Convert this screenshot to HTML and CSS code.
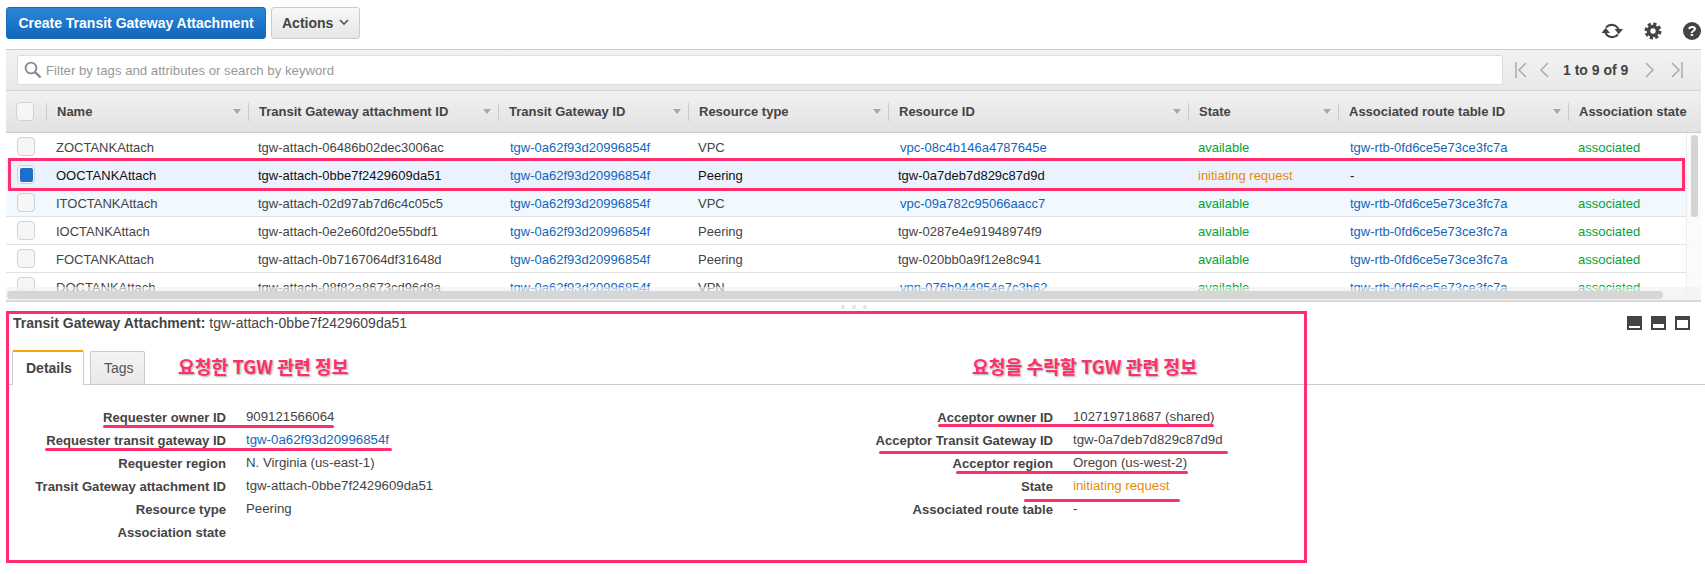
FILE: index.html
```html
<!DOCTYPE html>
<html lang="en">
<head>
<meta charset="UTF-8">
<meta name="viewport" content="width=device-width, initial-scale=1.0">
<title>Transit Gateway Attachments</title>
<link rel="stylesheet" href="styles.css">
</head>
<body>
<div class="page">
    <div class="toolbar">
        <button class="btn btn-primary">Create Transit Gateway Attachment</button>
        <button class="btn btn-actions">Actions
            <svg class="caret" width="10" height="7" viewBox="0 0 10 7"><path d="M1 1l4 4 4-4" fill="none" stroke="#555" stroke-width="1.6"/></svg>
        </button>
        <div class="tool-icons">
            <svg width="22" height="20" viewBox="0 0 22 20"><g fill="none" stroke="#444" stroke-width="2"><path d="M5 6.5a7.5 7.5 0 0 1 12.6 2"/><path d="M17 13.5a7.5 7.5 0 0 1-12.6-2"/></g><path d="M13.5 8h8.5l-4.2 5.2zM0.5 12h8.5l-4.3-5.2z" fill="#444"/></svg>
            <svg width="18" height="18" viewBox="0 0 18 18"><circle cx="9" cy="9" r="7" fill="none" stroke="#444" stroke-width="3" stroke-dasharray="3.2 2.3"/><circle cx="9" cy="9" r="4.5" fill="none" stroke="#444" stroke-width="3.6"/></svg>
            <span class="help">?</span>
        </div>
    </div>

    <div class="filter-bar">
        <div class="search">
            <svg width="18" height="18" viewBox="0 0 18 18"><circle cx="7" cy="7" r="5.4" fill="none" stroke="#888" stroke-width="1.8"/><path d="M11 11l5.5 5.5" stroke="#888" stroke-width="2.4"/></svg>
            <span>Filter by tags and attributes or search by keyword</span>
        </div>
        <div class="pager">
            <svg width="12" height="16" viewBox="0 0 12 16"><path d="M1 0v16M11 1L4 8l7 7" fill="none" stroke="#aaa" stroke-width="1.5"/></svg>
            <svg class="prev" width="9" height="16" viewBox="0 0 9 16"><path d="M8 1L1 8l7 7" fill="none" stroke="#aaa" stroke-width="1.5"/></svg>
            <span class="pager-text">1 to 9 of 9</span>
            <svg class="next" width="9" height="16" viewBox="0 0 9 16"><path d="M1 1l7 7-7 7" fill="none" stroke="#aaa" stroke-width="1.5"/></svg>
            <svg width="12" height="16" viewBox="0 0 12 16"><path d="M11 0v16M1 1l7 7-7 7" fill="none" stroke="#aaa" stroke-width="1.5"/></svg>
        </div>
    </div>

    <div class="grid-wrap">
        <div class="row head">
            <div class="check-cell"><span class="check"></span></div>
            <div class="th"><b>Name</b><i></i></div>
            <div class="th"><b>Transit Gateway attachment ID</b><i></i></div>
            <div class="th"><b>Transit Gateway ID</b><i></i></div>
            <div class="th"><b>Resource type</b><i></i></div>
            <div class="th"><b>Resource ID</b><i></i></div>
            <div class="th"><b>State</b><i></i></div>
            <div class="th"><b>Associated route table ID</b><i></i></div>
            <div class="th"><b>Association state</b></div>
        </div>
        <div class="row">
            <div class="check-cell"><span class="check"></span></div>
            <div class="td">ZOCTANKAttach</div>
            <div class="td">tgw-attach-06486b02dec3006ac</div>
            <div class="td"><a>tgw-0a62f93d20996854f</a></div>
            <div class="td">VPC</div>
            <div class="td"><a>vpc-08c4b146a4787645e</a></div>
            <div class="td ok">available</div>
            <div class="td"><a>tgw-rtb-0fd6ce5e73ce3fc7a</a></div>
            <div class="td ok">associated</div>
        </div>
        <div class="row selected">
            <div class="check-cell"><span class="check on"></span></div>
            <div class="td">OOCTANKAttach</div>
            <div class="td">tgw-attach-0bbe7f2429609da51</div>
            <div class="td"><a>tgw-0a62f93d20996854f</a></div>
            <div class="td">Peering</div>
            <div class="td">tgw-0a7deb7d829c87d9d</div>
            <div class="td warn">initiating request</div>
            <div class="td"><a class="plain">-</a></div>
            <div class="td"></div>
        </div>
        <div class="row hover">
            <div class="check-cell"><span class="check"></span></div>
            <div class="td">ITOCTANKAttach</div>
            <div class="td">tgw-attach-02d97ab7d6c4c05c5</div>
            <div class="td"><a>tgw-0a62f93d20996854f</a></div>
            <div class="td">VPC</div>
            <div class="td"><a>vpc-09a782c95066aacc7</a></div>
            <div class="td ok">available</div>
            <div class="td"><a>tgw-rtb-0fd6ce5e73ce3fc7a</a></div>
            <div class="td ok">associated</div>
        </div>
        <div class="row">
            <div class="check-cell"><span class="check"></span></div>
            <div class="td">IOCTANKAttach</div>
            <div class="td">tgw-attach-0e2e60fd20e55bdf1</div>
            <div class="td"><a>tgw-0a62f93d20996854f</a></div>
            <div class="td">Peering</div>
            <div class="td">tgw-0287e4e91948974f9</div>
            <div class="td ok">available</div>
            <div class="td"><a>tgw-rtb-0fd6ce5e73ce3fc7a</a></div>
            <div class="td ok">associated</div>
        </div>
        <div class="row">
            <div class="check-cell"><span class="check"></span></div>
            <div class="td">FOCTANKAttach</div>
            <div class="td">tgw-attach-0b7167064df31648d</div>
            <div class="td"><a>tgw-0a62f93d20996854f</a></div>
            <div class="td">Peering</div>
            <div class="td">tgw-020bb0a9f12e8c941</div>
            <div class="td ok">available</div>
            <div class="td"><a>tgw-rtb-0fd6ce5e73ce3fc7a</a></div>
            <div class="td ok">associated</div>
        </div>
        <div class="row">
            <div class="check-cell"><span class="check"></span></div>
            <div class="td">DOCTANKAttach</div>
            <div class="td">tgw-attach-08f82a8673cd96d8a</div>
            <div class="td"><a>tgw-0a62f93d20996854f</a></div>
            <div class="td">VPN</div>
            <div class="td"><a>vpn-076b944954e7c3b62</a></div>
            <div class="td ok">available</div>
            <div class="td"><a>tgw-rtb-0fd6ce5e73ce3fc7a</a></div>
            <div class="td ok">associated</div>
        </div>
        <!-- scrollbars sit on top of the rows -->
        <div class="track-v"><span></span></div>
        <div class="track-h"><span></span></div>
    </div>

    <div class="resizer"><i></i><i></i><i></i></div>

    <div class="detail-head">
        <div class="detail-title"><b>Transit Gateway Attachment:</b> tgw-attach-0bbe7f2429609da51</div>
        <div class="pane-icons">
            <span class="pane-icon small"></span>
            <span class="pane-icon mid"></span>
            <span class="pane-icon big"></span>
        </div>
    </div>

    <div class="tabs">
        <div class="tab active">Details</div>
        <div class="tab">Tags</div>
    </div>

    <div class="details">
        <dl class="col-left">
            <dt>Requester owner ID</dt><dd>909121566064</dd>
            <dt>Requester transit gateway ID</dt><dd><a>tgw-0a62f93d20996854f</a></dd>
            <dt>Requester region</dt><dd>N. Virginia (us-east-1)</dd>
            <dt>Transit Gateway attachment ID</dt><dd>tgw-attach-0bbe7f2429609da51</dd>
            <dt>Resource type</dt><dd>Peering</dd>
            <dt>Association state</dt><dd></dd>
        </dl>
        <dl class="col-right">
            <dt>Acceptor owner ID</dt><dd>102719718687 (shared)</dd>
            <dt>Acceptor Transit Gateway ID</dt><dd>tgw-0a7deb7d829c87d9d</dd>
            <dt>Acceptor region</dt><dd>Oregon (us-west-2)</dd>
            <dt>State</dt><dd class="warn">initiating request</dd>
            <dt>Associated route table</dt><dd>-</dd>
        </dl>
    </div>
</div>

<!-- pink annotations drawn over the console -->
<div class="box box-row"></div>
<div class="box box-detail"></div>
<div class="note note-left">요청한 TGW 관련 정보</div>
<div class="note note-right">요청을 수락할 TGW 관련 정보</div>
<div class="uline u1"></div>
<div class="uline u2"></div>
<div class="uline u3"></div>
<div class="uline u4"></div>
<div class="uline u5"></div>
<div class="uline u6"></div>
</body>
</html>
```

FILE: styles.css
```css
* {
    box-sizing: border-box;
}
html, body {
    height: 574px;
    overflow: hidden;
}
body {
    margin: 0;
    background-color: #fff;
    font-family: "Liberation Sans", Arial, sans-serif;
    font-size: 13px;
    color: #444;
    position: relative;
}
.page {
    padding: 7px 4px 0 6px;
}
a {
    color: #1166bb;
}

/* top buttons */
.toolbar {
    display: flex;
    height: 42px;
    align-items: flex-start;
}
.btn {
    height: 32px;
    border-radius: 3px;
    font-family: inherit;
    font-weight: bold;
    font-size: 14px;
    padding: 0;
}
.btn-primary {
    width: 260px;
    color: #fff;
    background: linear-gradient(#2b87d9, #1266bc);
    border: 1px solid #1a6ab8;
}
.btn-actions {
    width: 89px;
    margin-left: 5px;
    color: #444;
    background: linear-gradient(#f8f8f8, #e6e6e6);
    border: 1px solid #ccc;
    text-align: left;
    padding-left: 10px;
}
.caret {
    margin-left: 2px;
    vertical-align: 2px;
}
.tool-icons {
    margin-left: auto;
    margin-top: 14px;
    margin-right: 3px;
    display: flex;
    align-items: center;
    gap: 21px;
}
.help {
    width: 18px;
    height: 18px;
    margin-right: -3px;
    border-radius: 50%;
    background-color: #444;
    color: #fff;
    font-weight: bold;
    font-size: 15px;
    line-height: 18px;
    text-align: center;
}

/* filter row */
.filter-bar {
    height: 42px;
    display: flex;
    align-items: center;
    padding: 0 0 0 11px;
    border-top: 1px solid #ccc;
    border-bottom: 1px solid #d5d5d5;
    background: linear-gradient(#f2f2f2, #e9e9e9);
}
.search {
    width: 1486px;
    height: 30px;
    display: flex;
    align-items: center;
    gap: 4px;
    padding-left: 6px;
    background-color: #fff;
    border: 1px solid #ddd;
    border-radius: 3px;
    color: #999;
    font-size: 13.2px;
}
.pager {
    display: flex;
    align-items: center;
    margin-left: 12px;
}
.prev {
    margin-left: 13px;
}
.pager-text {
    width: 67px;
    margin-left: 14px;
    font-weight: bold;
    font-size: 14px;
    white-space: nowrap;
}
.next {
    margin-left: 15px;
}
.next + svg {
    margin-left: 17px;
}

/* the table */
.grid-wrap {
    position: relative;
    height: 211px;
    overflow: hidden;
    border-bottom: 2px solid #d8d8d8;
}
.row {
    display: grid;
    grid-template-columns: 40px 202px 250px 190px 200px 300px 150px 230px 133px;
    height: 28px;
    align-items: center;
    border-bottom: 1px solid #e1e1e1;
    white-space: nowrap;
}
.row.head {
    height: 42px;
    background: linear-gradient(#f1f1f1, #e2e2e2);
    border-bottom: 1px solid #ccc;
}
.row.selected {
    background-color: #ebf2fd;
    color: #111;
}
.row.hover {
    background-color: #f1f8fe;
}
.check-cell {
    padding-left: 11px;
}
.check {
    display: block;
    width: 18px;
    height: 19px;
    border: 1px solid #d2d2d2;
    border-radius: 4px;
    background-color: #f6f6f6;
    position: relative;
}
.check.on::after {
    content: "";
    position: absolute;
    left: 2px;
    top: 2px;
    width: 13px;
    height: 14px;
    border-radius: 2px;
    background-color: #1b70cc;
}
.head .check-cell {
    padding-left: 10px;
}
.th {
    display: flex;
    align-items: center;
    justify-content: space-between;
    height: 18px;
    padding: 0 7px 0 10px;
    border-left: 1px solid #ccc;
    font-size: 13px;
}
.th i {
    width: 0;
    height: 0;
    border-left: 4px solid transparent;
    border-right: 4px solid transparent;
    border-top: 5px solid #a8a8a8;
}
.td {
    padding: 1px 0 0 10px;
}
.td a {
    margin-left: 2px;
}
.td a.plain {
    color: #111;
}
.ok {
    color: #00a33c;
}
.warn {
    color: #e88a00;
}
.track-v {
    position: absolute;
    top: 42px;
    right: 0;
    bottom: 0;
    width: 15px;
    padding: 2px 3px 0 4px;
    background-color: rgba(250, 250, 250, 0.85);
    border-left: 1px solid #eee;
}
.track-v span {
    display: block;
    height: 82px;
    border-radius: 4px;
    background-color: #d4d4d4;
}
.track-h {
    position: absolute;
    left: 0;
    right: 0;
    bottom: 0;
    height: 13px;
    padding: 4px 38px 0 1px;
    background-color: rgba(240, 240, 240, 0.65);
}
.track-h span {
    display: block;
    height: 8px;
    border-radius: 4px;
    background-color: #d6d6d6;
}

/* drag handle between panes */
.resizer {
    height: 9px;
    display: flex;
    justify-content: center;
    align-items: center;
    gap: 7px;
}
.resizer i {
    width: 4px;
    height: 4px;
    border-radius: 50%;
    background-color: #e2e2e2;
}

/* lower pane */
.detail-head {
    height: 22px;
    display: flex;
    justify-content: space-between;
    align-items: center;
    padding: 2px 11px 0 7px;
}
.detail-title {
    font-size: 14px;
}
.pane-icons {
    display: flex;
    gap: 9px;
}
.pane-icon {
    width: 15px;
    height: 14px;
    background-color: #444;
    position: relative;
}
.pane-icon::after {
    content: "";
    position: absolute;
    left: 2px;
    right: 2px;
    bottom: 2px;
    background-color: #fff;
}
.pane-icon.small::after {
    height: 2px;
}
.pane-icon.mid::after {
    height: 4px;
}
.pane-icon.big::after {
    height: 8px;
}
.tabs {
    display: flex;
    gap: 6px;
    align-items: flex-end;
    height: 52px;
    padding-left: 6px;
    margin-right: -4px;
    border-bottom: 1px solid #ccc;
}
.tab {
    height: 33px;
    line-height: 32px;
    padding: 0 13px;
    width: 55px;
    font-size: 14px;
    border: 1px solid #ccc;
    border-bottom: none;
    border-radius: 2px 2px 0 0;
    background: linear-gradient(#f4f4f4, #e8e8e8);
    color: #555;
}
.tab.active {
    width: 72px;
    height: 35px;
    margin-bottom: -1px;
    background: #fff;
    border-top: 2px solid #f7a800;
    font-weight: bold;
    color: #444;
}
.details {
    display: grid;
    grid-template-columns: 827px 1fr;
    padding-top: 21px;
}
.details dl {
    display: grid;
    grid-template-columns: 220px 1fr;
    grid-auto-rows: 23px;
    column-gap: 20px;
    margin: 0;
    align-items: center;
}
.details dt {
    text-align: right;
    font-weight: bold;
    white-space: nowrap;
    font-size: 13.1px;
}
.details dd {
    margin: 0;
    font-size: 13.25px;
    padding-bottom: 2px;
}

/* annotations */
.box {
    position: absolute;
    border: 3px solid #ff2e6c;
}
.box-row {
    left: 8px;
    top: 158px;
    width: 1677px;
    height: 33px;
}
.box-detail {
    left: 6px;
    top: 311px;
    width: 1301px;
    height: 252px;
}
.note {
    position: absolute;
    top: 354px;
    font-family: "Noto Sans CJK KR", sans-serif;
    font-weight: bold;
    font-size: 18.25px;
    line-height: 24px;
    color: #ff2e6c;
    text-shadow: 1px 1px 2px rgba(0, 0, 0, 0.35);
    white-space: nowrap;
}
.note-left {
    left: 178px;
}
.note-right {
    left: 972px;
}
.uline {
    position: absolute;
    height: 3px;
    border-radius: 2px;
    background-color: #ff2e6c;
}
.u1 { left: 103px; top: 425px; width: 231px; }
.u2 { left: 45px; top: 448px; width: 347px; }
.u3 { left: 938px; top: 424px; width: 276px; }
.u4 { left: 879px; top: 451px; width: 349px; }
.u5 { left: 956px; top: 471px; width: 232px; }
.u6 { left: 1024px; top: 499px; width: 156px; }
```
